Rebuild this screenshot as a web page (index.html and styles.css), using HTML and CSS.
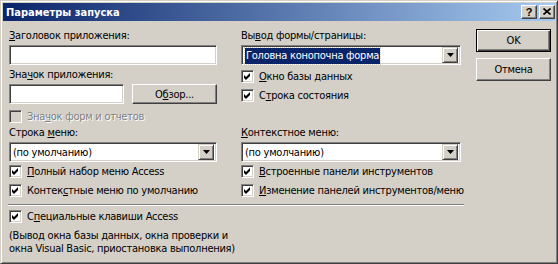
FILE: index.html
```html
<!DOCTYPE html>
<html lang="ru">
<head>
<meta charset="utf-8">
<title>Параметры запуска</title>
<link rel="stylesheet" href="styles.css">
</head>
<body>
<div class="win">
  <div class="title">
    <span class="title-text">Параметры запуска</span>
    <div class="tbtns">
      <span class="tb help">?</span>
      <span class="tb close"><svg width="8" height="7" viewBox="0 0 8 7"><path d="M0.5 0.5 L7.5 6.5 M7.5 0.5 L0.5 6.5" stroke="#000" stroke-width="1.6"/></svg></span>
    </div>
  </div>
  <div class="body">
    <div class="main">
      <div class="grid">
        <div class="col">
          <div class="lbl"><u>З</u>аголовок приложения:</div>
          <div class="edit"></div>
          <div class="lbl lbl2">Зна<u>ч</u>ок приложения:</div>
          <div class="icon-row">
            <div class="edit short"></div>
            <div class="btn browse">О<u>б</u>зор...</div>
          </div>
          <div class="chk disabled first"><span class="box"></span><span class="txt">Зна<u>ч</u>ок форм и отчетов</span></div>
        </div>
        <div class="col">
          <div class="lbl">Вы<u>в</u>од формы/страницы:</div>
          <div class="select">
            <span class="val"><span class="hl">Головна конопочна форма</span></span>
            <span class="drop"><svg width="7" height="4" viewBox="0 0 7 4"><path d="M0 0 H7 L3.5 4 Z" fill="#000"/></svg></span>
          </div>
          <div class="chk first"><span class="box"><svg width="9" height="9" viewBox="0 0 9 9"><path d="M1 3 L3 5 L7 1 L7 4 L3 8 L1 6 Z" fill="#000"/></svg></span><span class="txt"><u>О</u>кно базы данных</span></div>
          <div class="chk"><span class="box"><svg width="9" height="9" viewBox="0 0 9 9"><path d="M1 3 L3 5 L7 1 L7 4 L3 8 L1 6 Z" fill="#000"/></svg></span><span class="txt">С<u>т</u>рока состояния</span></div>
        </div>
        <div class="col">
          <div class="lbl">Строка <u>м</u>еню:</div>
          <div class="select">
            <span class="val">(по умолчанию)</span>
            <span class="drop"><svg width="7" height="4" viewBox="0 0 7 4"><path d="M0 0 H7 L3.5 4 Z" fill="#000"/></svg></span>
          </div>
          <div class="chk"><span class="box"><svg width="9" height="9" viewBox="0 0 9 9"><path d="M1 3 L3 5 L7 1 L7 4 L3 8 L1 6 Z" fill="#000"/></svg></span><span class="txt"><u>П</u>олный набор меню Access</span></div>
          <div class="chk"><span class="box"><svg width="9" height="9" viewBox="0 0 9 9"><path d="M1 3 L3 5 L7 1 L7 4 L3 8 L1 6 Z" fill="#000"/></svg></span><span class="txt">Контек<u>с</u>тные меню по умолчанию</span></div>
        </div>
        <div class="col">
          <div class="lbl"><u>К</u>онтекстное меню:</div>
          <div class="select">
            <span class="val">(по умолчанию)</span>
            <span class="drop"><svg width="7" height="4" viewBox="0 0 7 4"><path d="M0 0 H7 L3.5 4 Z" fill="#000"/></svg></span>
          </div>
          <div class="chk"><span class="box"><svg width="9" height="9" viewBox="0 0 9 9"><path d="M1 3 L3 5 L7 1 L7 4 L3 8 L1 6 Z" fill="#000"/></svg></span><span class="txt"><u>В</u>строенные панели инструментов</span></div>
          <div class="chk"><span class="box"><svg width="9" height="9" viewBox="0 0 9 9"><path d="M1 3 L3 5 L7 1 L7 4 L3 8 L1 6 Z" fill="#000"/></svg></span><span class="txt"><u>И</u>зменение панелей инструментов/меню</span></div>
        </div>
      </div>
      <div class="sep"></div>
      <div class="chk special"><span class="box"><svg width="9" height="9" viewBox="0 0 9 9"><path d="M1 3 L3 5 L7 1 L7 4 L3 8 L1 6 Z" fill="#000"/></svg></span><span class="txt">С<u>п</u>ециальные клавиши Access</span></div>
      <p class="note">(Вывод окна базы данных, окна проверки и<br>окна Visual Basic, приостановка выполнения)</p>
    </div>
    <div class="btns">
      <div class="btn def">OK</div>
      <div class="btn">Отмена</div>
    </div>
  </div>
</div>
</body>
</html>
```

FILE: styles.css
```css
* { box-sizing: border-box; }
html, body { margin: 0; padding: 0; background: #d4d0c8; }
body {
  font-family: "DejaVu Sans Condensed", "Liberation Sans", sans-serif;
  font-size: 11px;
  line-height: 13px;
  letter-spacing: -0.25px;
  color: #000;
}
u { text-decoration: underline; text-underline-offset: 1px; }

.win {
  width: 558px;
  height: 264px;
  background: #d4d0c8;
  border: 1px solid;
  border-color: #d4d0c8 #404040 #404040 #d4d0c8;
  box-shadow: inset 1px 1px #ffffff, inset -1px -1px #808080;
  padding: 2px;
  display: flex;
  flex-direction: column;
}

.title {
  height: 18px;
  background: linear-gradient(to right, #0a246a, #a6caf0);
  display: flex;
  align-items: center;
  justify-content: space-between;
  padding: 0 0 0 3px;
}
.title-text {
  color: #fff;
  font-weight: bold;
  font-size: 11px;
  letter-spacing: 0;
}
.tbtns { display: flex; gap: 2px; }
.tb {
  width: 16px;
  height: 14px;
  background: #d4d0c8;
  border: 1px solid;
  border-color: #fff #404040 #404040 #fff;
  box-shadow: inset -1px -1px #808080;
  display: flex;
  align-items: center;
  justify-content: center;
  font-weight: bold;
  font-size: 11px;
  line-height: 12px;
  letter-spacing: 0;
  font-family: "Liberation Sans", sans-serif;
}
.tb.close svg { display: block; margin-top: -1px; }

.body {
  display: flex;
  padding: 8px 0 0 6px;
  flex: 1;
}
.main { width: 456px; }

.grid {
  display: grid;
  grid-template-columns: 208px 220px;
  column-gap: 24px;
}
.col { display: flex; flex-direction: column; }

.lbl { height: 13px; margin-bottom: 3px; white-space: nowrap; }
.lbl2 { margin-top: 3px; }

.edit {
  height: 20px;
  background: #fff;
  border: 1px solid;
  border-color: #808080 #fff #fff #808080;
  box-shadow: inset 1px 1px #404040, inset -1px -1px #d4d0c8;
}
.edit.short { width: 115px; flex: none; }
.icon-row { display: flex; gap: 8px; }

.btn {
  background: #d4d0c8;
  border: 1px solid;
  border-color: #fff #404040 #404040 #fff;
  box-shadow: inset -1px -1px #808080;
  display: flex;
  align-items: center;
  justify-content: center;
  white-space: nowrap;
}
.browse { flex: 1; height: 20px; }

.select {
  height: 20px;
  background: #fff;
  border: 1px solid;
  border-color: #808080 #fff #fff #808080;
  box-shadow: inset 1px 1px #404040, inset -1px -1px #d4d0c8;
  display: flex;
  align-items: center;
  padding: 2px;
}
.select .val { flex: 1; padding-left: 1px; white-space: nowrap; }
.select .hl {
  background: #0a246a;
  color: #fff;
  padding: 1px 1px 2px 1px;
  outline: 1px dotted #d4d0c8;
}
.drop {
  width: 16px;
  height: 16px;
  background: #d4d0c8;
  border: 1px solid;
  border-color: #d4d0c8 #404040 #404040 #d4d0c8;
  box-shadow: inset 1px 1px #fff, inset -1px -1px #808080;
  display: flex;
  align-items: center;
  justify-content: center;
}
.drop svg { display: block; }

.chk {
  height: 19px;
  display: flex;
  align-items: center;
  gap: 5px;
  white-space: nowrap;
}
.chk.first { margin-top: 2px; }
.chk.disabled.first { margin-top: 3px; }
.box {
  width: 13px;
  height: 13px;
  background: #fff;
  border: 1px solid;
  border-color: #808080 #fff #fff #808080;
  box-shadow: inset 1px 1px #404040, inset -1px -1px #d4d0c8;
  display: flex;
  align-items: center;
  justify-content: center;
  flex: none;
}
.box svg { display: block; }
.chk.disabled .box { background: #d4d0c8; }
.chk.disabled .txt { color: #808080; text-shadow: 1px 1px #fff; }

.sep {
  width: 456px;
  margin-left: -1px;
  margin-top: 4px;
  height: 2px;
  border-top: 1px solid #808080;
  border-bottom: 1px solid #fff;
}
.special { margin-top: 1px; }
.note { margin: 3px 0 0 0; line-height: 13px; }

.btns {
  margin-left: 11px;
  padding-top: 0;
  display: flex;
  flex-direction: column;
  gap: 6px;
}
.btns .btn { width: 75px; height: 23px; }
.btn.def {
  border: 1px solid #000;
  box-shadow: inset 1px 1px #fff, inset -1px -1px #404040, inset -2px -2px #808080;
}
```
